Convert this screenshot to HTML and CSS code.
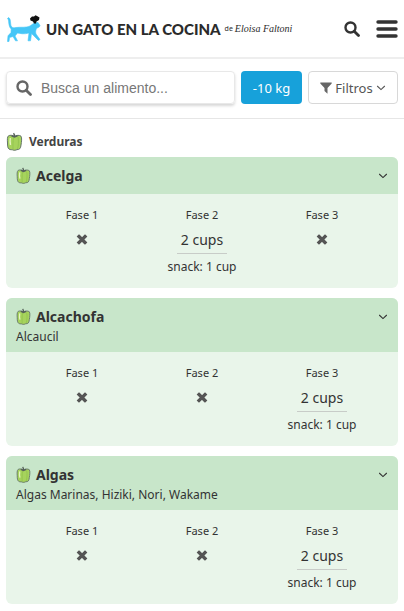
FILE: index.html
```html
<!doctype html>
<html lang="es">
  <head>
    <meta charset="UTF-8" />
    <meta name="viewport" content="width=device-width, initial-scale=1" />
    <title>Un gato en la cocina</title>
    <link rel="stylesheet" href="styles.css" />
  </head>
  <body>
    <svg class="sprite" aria-hidden="true">
      <symbol id="pepper" viewBox="0 0 16 19">
        <path d="M8 4.500C6 3 3.500 3 2 3.800C.600 5 .800 8 1 11C1 14 1.200 16 2.500 17C4 18 5 17.600 6 17.800C7.500 18.600 9 18.400 10.500 17.600C13 17.800 14.200 16.500 14.500 13C15 10 15.600 6 14.500 4.200C13 3 10 3 8 4.500Z" fill="#a6d35c" stroke="#66756a" />
        <path d="M7 5.500C6.300 9 6.500 14 6.500 17M11.500 5C12.300 9 12 14 11 17" fill="none" stroke="#8fc04c" stroke-width=".800" />
        <path d="M3.800 6C3.300 9 3.500 11 4 13" fill="none" stroke="#e6f3c4" stroke-width="1.400" />
        <path d="M5 3.800L8 5L11 3.800M8 4.800C8.300 3 7.800 2 7 1.200" fill="none" stroke="#55615a" stroke-width="1.500" />
      </symbol>
      <symbol id="search" viewBox="0 0 16 16">
        <circle cx="6.500" cy="6.500" r="5" fill="none" stroke="currentColor" stroke-width="2.400" />
        <path d="M10.200 10.200L14.500 14.500" stroke="currentColor" stroke-width="2.800" stroke-linecap="round" />
      </symbol>
      <symbol id="chevron" viewBox="0 0 10 10">
        <path d="M1.200 3L5 6.600L8.800 3" fill="none" stroke="currentColor" stroke-width="1.100" />
      </symbol>
      <symbol id="cross" viewBox="0 0 12 12">
        <path d="M3 3.500L9 9.500M9 3.500L3 9.500" stroke="currentColor" stroke-width="3.300" stroke-linecap="square" />
      </symbol>
    </svg>

    <header class="site-header">
      <a href="#" class="logo">
        <svg class="cat" viewBox="0 0 36 28" aria-hidden="true">
          <path d="M2.500 2.500C5.500 4 3.800 9 5.500 11.500C6.500 13 8 12.800 10 12.500C15 11.800 20 13 24 11C26 9.800 27 8.500 28.500 8L32 7.500L34 10.500C34 12 32 12.500 30.500 13.500C29.500 15.500 29.500 17.500 30 19L34 24.500L32.500 25.500L27.500 20.500L25.500 18.500L24.500 25.800H22L23 18C18 19.500 14 18.500 11.500 18L9 21L11.500 25.800H9.500L7 21.500L3.500 22.500L3 26.500H1.500L2 20.800L5 17.500L5.200 14C1.800 11 3.500 5 1.500 3.500Z" fill="#45c6f7" stroke="#45c6f7" stroke-width=".600" />
          <path d="M28 8.500L27 6.500L24.500 5.500L24 3.500L26 1.500L28 1.500L29.500 .300L31.500 1.200L33.500 2.500L33 5L30.500 6.500L30 8.500Z" fill="#111" />
        </svg>
        <span class="logo-name">UN GATO EN LA COCINA</span>
        <span class="logo-by">de</span>
        <span class="logo-sign">Eloisa Faltoni</span>
      </a>
      <button class="icon-btn" aria-label="Buscar">
        <svg class="icon-search" aria-hidden="true"><use href="#search" /></svg>
      </button>
      <button class="icon-btn menu-btn" aria-label="Menú">
        <svg class="icon-menu" viewBox="0 0 21 18" aria-hidden="true">
          <path d="M1.500 2H19.500M1.500 9H19.500M1.500 16H19.500" stroke="currentColor" stroke-width="3.400" stroke-linecap="round" />
        </svg>
      </button>
    </header>

    <div class="toolbar">
      <label class="search-box">
        <svg class="icon-search" aria-hidden="true"><use href="#search" /></svg>
        <input type="text" aria-label="Busca un alimento" placeholder="Busca un alimento..." />
      </label>
      <button class="btn btn-primary">-10 kg</button>
      <button class="btn btn-filter">
        <svg class="icon-filter" viewBox="0 0 12 12" aria-hidden="true">
          <path d="M.300.500H11.700V1.500L7.500 6V11.700L4.500 9V6L.300 1.500Z" fill="#666" />
        </svg>
        Filtros
        <svg class="icon-chevron" aria-hidden="true"><use href="#chevron" /></svg>
      </button>
    </div>

    <main class="foods">
      <h2 class="category">
        <svg class="pepper-lg" aria-hidden="true"><use href="#pepper" /></svg>
        Verduras
      </h2>

      <article class="food">
        <div class="food-header">
          <svg class="pepper" aria-hidden="true"><use href="#pepper" /></svg>
          <h3>Acelga</h3>
          <button class="toggle" aria-label="Ver Acelga">
            <svg class="icon-chevron" aria-hidden="true"><use href="#chevron" /></svg>
          </button>
        </div>
        <div class="phases">
          <div class="phase">
            <span class="phase-name">Fase 1</span>
            <span class="amount none"><svg role="img" aria-label="No"><use href="#cross" /></svg></span>
          </div>
          <div class="phase">
            <span class="phase-name">Fase 2</span>
            <span class="amount">2 cups</span>
            <span class="snack">snack: 1 cup</span>
          </div>
          <div class="phase">
            <span class="phase-name">Fase 3</span>
            <span class="amount none"><svg role="img" aria-label="No"><use href="#cross" /></svg></span>
          </div>
        </div>
      </article>

      <article class="food">
        <div class="food-header">
          <svg class="pepper" aria-hidden="true"><use href="#pepper" /></svg>
          <h3>Alcachofa</h3>
          <button class="toggle" aria-label="Ver Alcachofa">
            <svg class="icon-chevron" aria-hidden="true"><use href="#chevron" /></svg>
          </button>
          <p class="aliases">Alcaucil</p>
        </div>
        <div class="phases">
          <div class="phase">
            <span class="phase-name">Fase 1</span>
            <span class="amount none"><svg role="img" aria-label="No"><use href="#cross" /></svg></span>
          </div>
          <div class="phase">
            <span class="phase-name">Fase 2</span>
            <span class="amount none"><svg role="img" aria-label="No"><use href="#cross" /></svg></span>
          </div>
          <div class="phase">
            <span class="phase-name">Fase 3</span>
            <span class="amount">2 cups</span>
            <span class="snack">snack: 1 cup</span>
          </div>
        </div>
      </article>

      <article class="food">
        <div class="food-header">
          <svg class="pepper" aria-hidden="true"><use href="#pepper" /></svg>
          <h3>Algas</h3>
          <button class="toggle" aria-label="Ver Algas">
            <svg class="icon-chevron" aria-hidden="true"><use href="#chevron" /></svg>
          </button>
          <p class="aliases">Algas Marinas, Hiziki, Nori, Wakame</p>
        </div>
        <div class="phases">
          <div class="phase">
            <span class="phase-name">Fase 1</span>
            <span class="amount none"><svg role="img" aria-label="No"><use href="#cross" /></svg></span>
          </div>
          <div class="phase">
            <span class="phase-name">Fase 2</span>
            <span class="amount none"><svg role="img" aria-label="No"><use href="#cross" /></svg></span>
          </div>
          <div class="phase">
            <span class="phase-name">Fase 3</span>
            <span class="amount">2 cups</span>
            <span class="snack">snack: 1 cup</span>
          </div>
        </div>
      </article>
    </main>
  </body>
</html>
```
FILE: styles.css
```css
* {
  box-sizing: border-box;
}

body {
  margin: 0;
  font-family: "Noto Sans", "Open Sans", sans-serif;
  font-size: 12px;
  color: #333;
  background: #fff;
}

h2,
h3,
p {
  margin: 0;
}

button {
  padding: 0;
  border: none;
  background: none;
  color: inherit;
  font-family: inherit;
  cursor: pointer;
}

svg {
  display: block;
  flex: none;
}

.sprite {
  display: none;
}

/* Header */
.site-header {
  display: flex;
  align-items: center;
  height: 59px;
  padding: 0 6px;
  border-bottom: 2px solid #eee;
}

.logo {
  display: flex;
  align-items: center;
  margin-right: auto;
  color: #2b2b2b;
  text-decoration: none;
  white-space: nowrap;
}

.cat {
  width: 36px;
  height: 28px;
}

.logo-name {
  margin-left: 4px;
  font-family: Lato, sans-serif;
  font-size: 15px;
  font-weight: 900;
}

.logo-by {
  margin-left: 4px;
  font-size: 7px;
}

.logo-sign {
  margin-left: 2px;
  font-family: "Liberation Serif", serif;
  font-size: 10px;
  font-style: italic;
}

.icon-search {
  width: 16px;
  height: 16px;
}

.menu-btn {
  margin-left: 16px;
}

.icon-menu {
  width: 22px;
  height: 18px;
}

/* Search and filters */
.toolbar {
  display: flex;
  gap: 6px;
  padding: 12px 6px 14px;
  border-bottom: 1px solid #e6e6e6;
}

.search-box {
  flex: 1;
  display: flex;
  align-items: center;
  gap: 9px;
  min-width: 0;
  height: 33px;
  padding: 0 9px;
  border: 1px solid #e8e8e8;
  border-radius: 4px;
  box-shadow: 0 2px 3px rgba(0, 0, 0, 0.16);
  color: #666;
}

.search-box input {
  flex: 1;
  min-width: 0;
  padding: 0;
  border: none;
  outline: none;
  background: none;
  font-family: "Liberation Sans", Arial, sans-serif;
  font-size: 14px;
}

.search-box input::placeholder {
  color: #777;
}

.btn {
  display: flex;
  align-items: center;
  justify-content: center;
  gap: 3px;
  height: 33px;
  border-radius: 4px;
  font-size: 13px;
}

.btn-primary {
  width: 61px;
  background: #17a1da;
  color: #fff;
}

.btn-filter {
  width: 90px;
  border: 1px solid #d8d8d8;
  color: #555;
}

.icon-filter {
  width: 12px;
  height: 12px;
}

.icon-chevron {
  width: 10px;
  height: 10px;
}

/* Food list */
.foods {
  padding: 12px 6px 6px;
}

.category {
  display: flex;
  align-items: center;
  gap: 6px;
  height: 20px;
  margin-bottom: 6px;
  font-size: 12px;
  color: #444;
}

.pepper-lg {
  width: 17px;
  height: 19px;
}

.pepper {
  width: 15px;
  height: 17px;
}

.food {
  margin-bottom: 10px;
  border-radius: 6px;
  overflow: hidden;
  background: #e9f5ea;
}

.food:last-child {
  margin-bottom: 0;
}

.food-header {
  display: flex;
  flex-wrap: wrap;
  align-items: center;
  padding: 7px 10px;
  background: #c8e6ca;
}

.food-header h3 {
  margin-left: 5px;
  font-size: 14px;
  line-height: 23px;
}

.toggle {
  margin-left: auto;
}

.aliases {
  flex-basis: 100%;
  line-height: 17px;
}

.phases {
  display: grid;
  grid-template-columns: repeat(3, 1fr);
  padding: 12px 16px;
}

.phase {
  display: flex;
  flex-direction: column;
  align-items: center;
}

.phase-name {
  font-size: 11px;
  line-height: 18px;
}

.amount {
  height: 30px;
  margin-bottom: 4px;
  padding: 0 4px;
  border-bottom: 1px solid #c8ccc8;
  font-size: 14px;
  line-height: 31px;
}

.none {
  display: flex;
  align-items: center;
  border-color: transparent;
  color: #555;
}

.none svg {
  width: 12px;
  height: 12px;
}

.snack {
  line-height: 18px;
}
```
